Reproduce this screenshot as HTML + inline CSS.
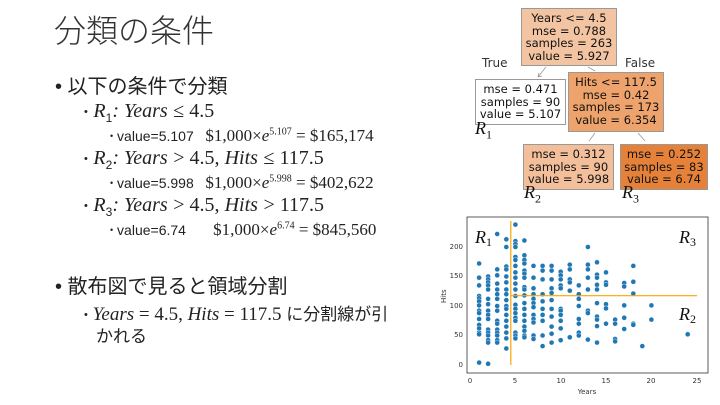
<!DOCTYPE html>
<html><head><meta charset="utf-8"><style>
body{margin:0;width:720px;height:405px;background:#fff;position:relative;overflow:hidden;font-family:"Liberation Sans","Noto Sans CJK JP",sans-serif;color:#222}
.a{position:absolute;white-space:nowrap}
.m{font-family:"Liberation Serif","Noto Serif CJK SC",serif;font-style:italic}
.n{font-family:"Liberation Serif",serif}
.t{font-family:"DejaVu Sans",sans-serif;font-size:11.5px;line-height:12.5px;text-align:center;color:#111;position:absolute;border:1px solid #999;box-sizing:border-box;padding-top:3px}
.R{position:absolute;font-family:"Liberation Serif",serif;font-style:italic;font-size:18px;color:#111}
.R sub{font-style:normal;font-size:12px}
.b{font-size:11px;vertical-align:2px}
</style></head><body>
<div class="a" style="left:54px;top:6px;font-size:32px;font-weight:300;color:#333">分類の条件</div>
<div class="a" style="left:55px;top:70px;font-size:20px">• 以下の条件で分類</div>
<div class="a" style="left:84px;top:100px;font-size:20px"><span class="b">•</span> <span class="m">R</span><sub style="font-size:12px">1</sub><span class="m">: Years</span> <span class="n">≤ 4.5</span></div>
<div class="a" style="left:110px;top:126px;font-size:14px"><span class="b" style="font-size:9px">•</span> value=5.107 &nbsp;&nbsp;<b class="n" style="font-size:17px;font-weight:normal">$1,000×<i>e</i><sup style="font-size:10px">5.107</sup> = $165,174</b></div>
<div class="a" style="left:84px;top:147px;font-size:20px"><span class="b">•</span> <span class="m">R</span><sub style="font-size:12px">2</sub><span class="m">: Years</span> <span class="n">&gt; 4.5, </span><span class="m">Hits</span> <span class="n">≤ 117.5</span></div>
<div class="a" style="left:110px;top:173px;font-size:14px"><span class="b" style="font-size:9px">•</span> value=5.998 &nbsp;&nbsp;<b class="n" style="font-size:17px;font-weight:normal">$1,000×<i>e</i><sup style="font-size:10px">5.998</sup> = $402,622</b></div>
<div class="a" style="left:84px;top:194px;font-size:20px"><span class="b">•</span> <span class="m">R</span><sub style="font-size:12px">3</sub><span class="m">: Years</span> <span class="n">&gt; 4.5, </span><span class="m">Hits</span> <span class="n">&gt; 117.5</span></div>
<div class="a" style="left:110px;top:220px;font-size:14px"><span class="b" style="font-size:9px">•</span> value=6.74 &nbsp;&nbsp;&nbsp;&nbsp;&nbsp;&nbsp;<b class="n" style="font-size:17px;font-weight:normal">$1,000×<i>e</i><sup style="font-size:10px">6.74</sup> = $845,560</b></div>
<div class="a" style="left:55px;top:270px;font-size:20px">• 散布図で見ると領域分割</div>
<div class="a" style="left:84px;top:300px;font-size:17px"><span class="b">•</span> <span class="m" style="font-size:19px">Years</span> <span class="n" style="font-size:19px">= 4.5,</span> <span class="m" style="font-size:19px">Hits</span> <span class="n" style="font-size:19px">= 117.5</span> に分割線が引</div>
<div class="a" style="left:96px;top:322px;font-size:17px">かれる</div>

<div class="t" style="left:521px;top:8px;width:96px;height:58px;background:#f3c4a1">Years &lt;= 4.5<br>mse = 0.788<br>samples = 263<br>value = 5.927</div>
<div class="a" style="left:482px;top:56px;font-family:'DejaVu Sans';font-size:12px;color:#333">True</div>
<div class="a" style="left:625px;top:56px;font-family:'DejaVu Sans';font-size:12px;color:#333">False</div>
<div class="t" style="left:475px;top:79px;width:91px;height:46px;background:#fff">mse = 0.471<br>samples = 90<br>value = 5.107</div>
<div class="t" style="left:568px;top:72px;width:96px;height:60px;background:#eda36b">Hits &lt;= 117.5<br>mse = 0.42<br>samples = 173<br>value = 6.354</div>
<div class="t" style="left:523px;top:144px;width:91px;height:46px;background:#f2bf9a">mse = 0.312<br>samples = 90<br>value = 5.998</div>
<div class="t" style="left:620px;top:144px;width:88px;height:46px;background:#e58139">mse = 0.252<br>samples = 83<br>value = 6.74</div>
<svg class="a" style="left:0;top:0" width="720" height="405"><g stroke="#999" fill="none" stroke-width="0.8">
<path d="M546 67 L538 77 M538 77l1-4 M538 77l4-1"/><path d="M588 67 L595 71"/><path d="M595 133 L589 141"/><path d="M638 133 L645 141"/></g></svg>
<div class="R" style="left:475px;top:118px">R<sub>1</sub></div>
<div class="R" style="left:524px;top:182px">R<sub>2</sub></div>
<div class="R" style="left:622px;top:182px">R<sub>3</sub></div>

<svg id="p" class="a" style="left:0;top:0" width="720" height="405" font-family="DejaVu Sans" font-size="7" fill="#333">
<rect x="467" y="217" width="241" height="156" fill="none" stroke="#333" stroke-width="0.8"/>
<g id="pts" fill="#1f77b4" stroke="#fff" stroke-width="0.4"></g>
<line x1="510.8" y1="221" x2="510.8" y2="365" stroke="#ffa500" stroke-width="1.2"/>
<line x1="510.8" y1="295.7" x2="697" y2="295.7" stroke="#ffa500" stroke-width="1.2"/>
<g text-anchor="end"><text x="463" y="367">0</text><text x="463" y="337">50</text><text x="463" y="308">100</text><text x="463" y="278">150</text><text x="463" y="249">200</text></g>
<g text-anchor="middle"><text x="470" y="383">0</text><text x="515" y="383">5</text><text x="561" y="383">10</text><text x="606" y="383">15</text><text x="651" y="383">20</text><text x="697" y="383">25</text><text x="587" y="394">Years</text></g>
<text transform="translate(446,303) rotate(-90)">Hits</text>
<text x="475" y="243" font-family="Liberation Serif" font-style="italic" font-size="18" fill="#111">R<tspan font-style="normal" font-size="12" dy="3">1</tspan></text>
<text x="679" y="243" font-family="Liberation Serif" font-style="italic" font-size="18" fill="#111">R<tspan font-style="normal" font-size="12" dy="3">3</tspan></text>
<text x="679" y="320" font-family="Liberation Serif" font-style="italic" font-size="18" fill="#111">R<tspan font-style="normal" font-size="12" dy="3">2</tspan></text>
</svg>
<script>
var d={1:[172,148,135,117,113,108,101,92,88,78,68,62,55,52,4],2:[150,145,140,135,128,112,103,92,85,78,60,55,50,42,38,2],3:[222,162,152,138,128,120,112,100,92,75,70,60,55,50,42,38],4:[213,200,167,162,150,140,128,120,110,100,95,85,75,65,55,45,28],5:[238,210,205,200,183,178,168,157,148,138,128,117,102,95,88,80,75,55,50,45],6:[211,186,178,172,160,155,148,132,128,118,105,95,85,75,65,58,50,47],7:[168,148,130,120,112,105,98,85,78,72,50,44],8:[168,160,145,120,108,95,85,75,50,32],9:[168,160,145,130,122,110,95,82,65,53,38],10:[158,152,145,135,130,95,92,85,75,62,42],11:[170,162,145,140,126,47],12:[135,120,112,100,78,70,55,50],13:[200,170,162,148,128,92,88,43],14:[174,153,148,136,128,105,82,77,66,38],15:[157,140,136,103,96,70],16:[77,70,44,40],17:[139,133,101,80,61],18:[168,141,121,70,68],19:[32],20:[101,77],24:[52]};
var g=document.getElementById('pts'),s='';
for(var y in d){d[y].forEach(function(h){s+='<circle cx="'+(470+9.07*y).toFixed(1)+'" cy="'+(365-0.59*h).toFixed(1)+'" r="2.5"/>';});}
g.innerHTML=s;
</script>
</body></html>
